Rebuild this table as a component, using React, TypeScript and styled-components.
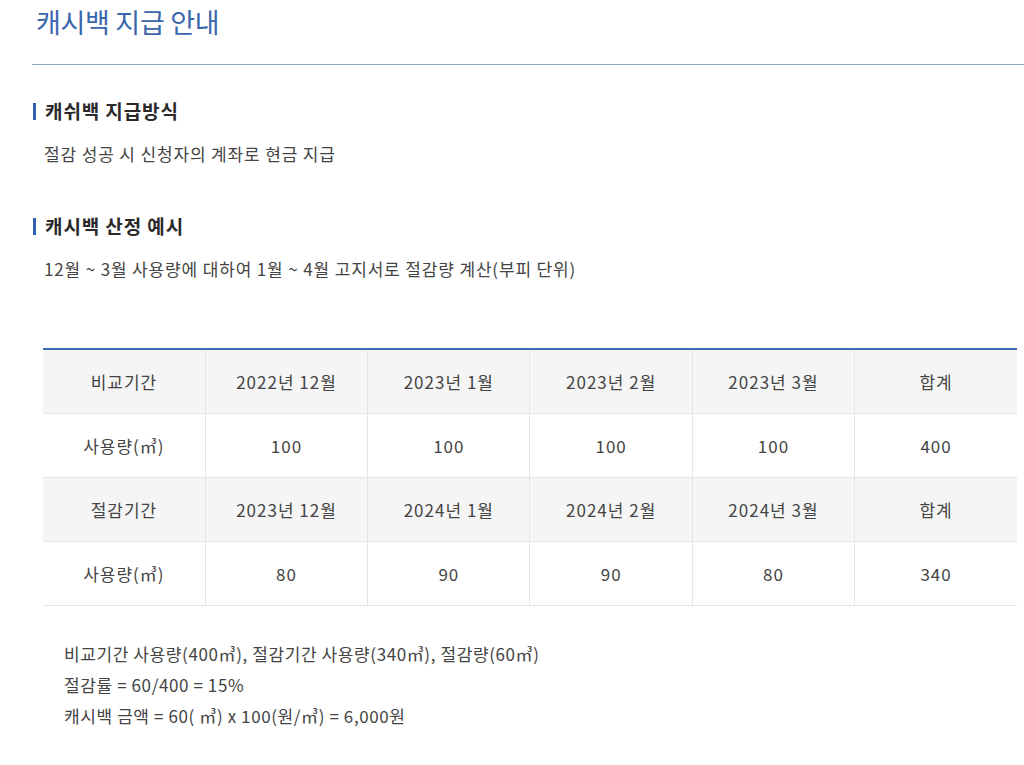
import React from "react";
import styled, { createGlobalStyle } from "styled-components";

const Global = createGlobalStyle`
  html, body { margin: 0; padding: 0; background: #fff; }
  body { font-family: "Noto Sans CJK KR", "Noto Sans", sans-serif; color: #444; }
`;

const Page = styled.div`
  padding-left: 32px;
`;

const Title = styled.h1`
  margin: 0;
  padding-left: 4px;
  font-size: 27px;
  line-height: 44px;
  font-weight: 400;
  color: #3a66ab;
  letter-spacing: -0.3px;
`;

const Divider = styled.hr`
  margin: 20px 0 0;
  border: 0;
  height: 1px;
  background: #8ca6c7;
`;

const Heading = styled.h2<{ $top: number }>`
  margin: ${(p) => p.$top}px 0 0;
  display: flex;
  align-items: center;
  gap: 9px;
  font-size: 19px;
  line-height: 30px;
  font-weight: 700;
  color: #2a2a2a;
  letter-spacing: 0.9px;
  &::before {
    content: "";
    width: 3px;
    height: 17px;
    background: #2f62b3;
    margin-left: 1px;
  }
`;

const Body = styled.p`
  margin: 13px 0 0 12px;
  font-size: 17px;
  line-height: 30px;
  color: #444;
  letter-spacing: 0.85px;
`;

const Table = styled.table`
  margin: 64px 7px 0 11px;
  width: calc(100% - 18px);
  border-collapse: collapse;
  border-top: 2px solid #3d6bb3;
  table-layout: fixed;
`;

const Row = styled.tr<{ $gray?: boolean }>`
  background: ${(p) => (p.$gray ? "#f5f5f5" : "#fff")};
`;

const Cell = styled.td`
  height: 63px;
  padding: 0;
  text-align: center;
  font-size: 17px;
  color: #444;
  border-bottom: 1px solid #e6e6e6;
  border-left: 1px solid #e6e6e6;
  letter-spacing: 1px;
  &:first-child { border-left: 0; }
`;

const Notes = styled.div`
  margin: 32px 0 0 32px;
  font-size: 17px;
  line-height: 31px;
  color: #444;
  letter-spacing: 0.6px;
`;

const rows: { gray: boolean; cells: string[] }[] = [
  { gray: true, cells: ["비교기간", "2022년 12월", "2023년 1월", "2023년 2월", "2023년 3월", "합계"] },
  { gray: false, cells: ["사용량(㎥)", "100", "100", "100", "100", "400"] },
  { gray: true, cells: ["절감기간", "2023년 12월", "2024년 1월", "2024년 2월", "2024년 3월", "합계"] },
  { gray: false, cells: ["사용량(㎥)", "80", "90", "90", "80", "340"] },
];

export default function App() {
  return (
    <Page>
      <Global />
      <Title>캐시백 지급 안내</Title>
      <Divider />
      <Heading $top={31}>캐쉬백 지급방식</Heading>
      <Body>절감 성공 시 신청자의 계좌로 현금 지급</Body>
      <Heading $top={42}>캐시백 산정 예시</Heading>
      <Body>12월 ~ 3월 사용량에 대하여 1월 ~ 4월 고지서로 절감량 계산(부피 단위)</Body>
      <Table>
        <tbody>
          {rows.map((r, i) => (
            <Row key={i} $gray={r.gray}>
              {r.cells.map((c, j) => (
                <Cell key={j}>{c}</Cell>
              ))}
            </Row>
          ))}
        </tbody>
      </Table>
      <Notes>
        <div>비교기간 사용량(400㎥), 절감기간 사용량(340㎥), 절감량(60㎥)</div>
        <div>절감률 = 60/400 = 15%</div>
        <div>캐시백 금액 = 60( ㎥) x 100(원/㎥) = 6,000원</div>
      </Notes>
    </Page>
  );
}
